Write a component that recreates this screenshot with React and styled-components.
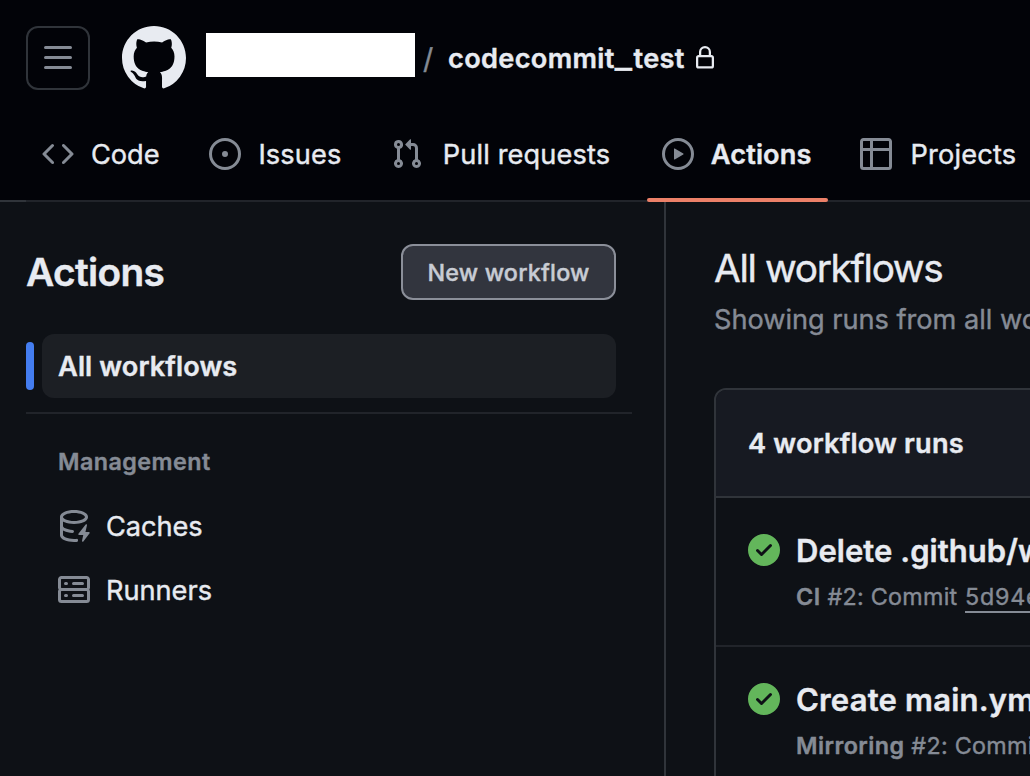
import React from 'react';
import styled, { createGlobalStyle } from 'styled-components';

const c = {
  bg: '#0e1116',
  inset: '#020308',
  text: '#e8ebf1',
  muted: '#858b95',
  border: '#30343a',
  borderMuted: '#21242a',
  accent: '#447df0',
  coral: '#ec8068',
  green: '#63b65b',
};

const GlobalStyle = createGlobalStyle`
  * { box-sizing: border-box; }
  html, body { margin: 0; height: 100%; overflow: hidden; background: ${c.bg}; }
  body {
    font-family: Inter, "Liberation Sans", sans-serif;
    font-size: 27.2px;
    color: ${c.text};
    white-space: nowrap;
    -webkit-text-stroke: 0.4px currentColor;
  }
  #root { height: 100%; }
  h1, h2, h3, p { margin: 0; }
`;

const Page = styled.div`
  display: flex;
  flex-direction: column;
  width: 1030px;
  height: 776px;
  overflow: hidden;
`;

const Icon = styled.svg.attrs({ viewBox: '0 0 16 16', 'aria-hidden': true })`
  display: block;
  flex: none;
  width: ${(p) => p.$size || 32}px;
  height: ${(p) => p.$size || 32}px;
  fill: ${(p) => p.$color || c.muted};
`;

const Header = styled.header`
  flex: none;
  height: 202px;
  background: ${c.inset};
  display: flex;
  flex-direction: column;
`;

const TopBar = styled.div`
  display: flex;
  align-items: center;
  height: 108px;
  padding: 8px 26px 0;
`;

const MenuButton = styled.button`
  display: grid;
  place-items: center;
  width: 64px;
  height: 64px;
  padding: 0;
  margin-right: 32px;
  background: transparent;
  border: 2px solid ${c.border};
  border-radius: 12px;
`;

const Owner = styled.div`
  width: 209px;
  height: 44px;
  margin: -6px 0 0 20px;
  background: #fff;
`;

const Slash = styled.span`
  width: 33px;
  padding: 2px 0 0 8px;
  font-size: 28.5px;
  line-height: 40px;
  color: ${c.muted};
`;

const RepoName = styled.span`
  width: 245px;
  padding-top: 2px;
  font-weight: 600;
  line-height: 40px;
  letter-spacing: 0.32px;
`;

const Underscore = styled.span`
  display: inline-block;
  transform: scaleX(1.35);
  margin: 0 3.4px 0 2.4px;
`;

const TabBar = styled.nav`
  display: flex;
  gap: 16px;
  height: 92px;
  padding-left: 26px;
`;

const Tab = styled.a`
  position: relative;
  display: flex;
  align-items: center;
  flex: none;
  width: ${(p) => p.$width}px;
  padding: 0 15px 0 ${(p) => (p.$active ? 15 : 16)}px;
  font-weight: ${(p) => (p.$active ? 600 : 400)};
  letter-spacing: ${(p) => p.$tracking}px;

  &::after {
    content: '';
    display: ${(p) => (p.$active ? 'block' : 'none')};
    position: absolute;
    left: 0;
    right: 0;
    bottom: -2px;
    height: 4px;
    border-radius: 2px;
    background: ${c.coral};
  }
`;

const TabLabel = styled.span`
  margin-left: ${(p) => p.$inset}px;
  padding-top: 2px;
  line-height: 40px;
`;

const HeaderRule = styled.div`
  height: 2px;
  background: ${c.borderMuted};
  border-left: 26px solid ${c.border};
`;

const Body = styled.div`
  display: flex;
  flex: 1;
  min-height: 0;
`;

const Sidebar = styled.aside`
  flex: none;
  width: 666px;
  padding: 42px 32px 0 26px;
  border-right: 2px solid ${c.border};
`;

const SidebarHead = styled.div`
  display: flex;
  align-items: center;
  justify-content: space-between;
  height: 56px;
  padding-right: 16px;
`;

const SidebarTitle = styled.h2`
  font-size: 38.8px;
  font-weight: 600;
  line-height: 56px;
  letter-spacing: -0.66px;
`;

const NewButton = styled.button`
  width: 215px;
  height: 56px;
  padding: 1px 0 0;
  font: 500 23.3px/51px Inter, "Liberation Sans", sans-serif;
  letter-spacing: 0.22px;
  color: #c8ccd4;
  -webkit-text-stroke: 0.4px currentColor;
  background: #32353e;
  border: 2px solid #8b8f99;
  border-radius: 12px;
`;

const SelectedRow = styled.div`
  display: flex;
  align-items: center;
  gap: 8px;
  margin-top: 34px;
  padding-right: 16px;
`;

const SelectedBar = styled.span`
  width: 8px;
  height: 48px;
  border-radius: 4px;
  background: ${c.accent};
`;

const SelectedItem = styled.a`
  flex: 1;
  height: 64px;
  padding: 1px 0 0 16px;
  border-radius: 12px;
  background: #1c1f24;
  font-weight: 600;
  line-height: 64px;
  letter-spacing: 0.1px;
`;

const Divider = styled.div`
  height: 2px;
  margin-top: 14px;
  background: ${c.borderMuted};
`;

const GroupTitle = styled.h3`
  margin: 28px 0 12px;
  padding-left: 32px;
  font-size: 23.3px;
  font-weight: 600;
  line-height: 40px;
  letter-spacing: 0.46px;
  color: ${c.muted};
`;

const NavItem = styled.a`
  display: flex;
  align-items: center;
  gap: 16px;
  height: 64px;
  padding-left: 32px;
  letter-spacing: ${(p) => p.$tracking}px;
`;

const Main = styled.main`
  flex: 1;
  min-width: 0;
  overflow: hidden;
  padding: 42px 0 0 48px;
`;

const Title = styled.h1`
  font-size: 38.8px;
  font-weight: 400;
  line-height: 48px;
  letter-spacing: -1.34px;
`;

const Subtitle = styled.p`
  margin-top: 8px;
  line-height: 40px;
  letter-spacing: -0.03px;
  color: ${c.muted};
`;

const RunsBox = styled.section`
  width: 900px;
  height: 600px;
  margin-top: 48px;
  border: 2px solid ${c.border};
  border-radius: 12px;
  overflow: hidden;
`;

const RunsHead = styled.div`
  height: 108px;
  padding: 1px 0 0 32px;
  border-bottom: 2px solid ${c.border};
  background: #171a22;
  font-weight: 600;
  line-height: 106px;
  letter-spacing: 0.18px;
`;

const RunRow = styled.article`
  display: flex;
  gap: 16px;
  height: 149px;
  padding: 32px 0 0 32px;
  border-bottom: 2px solid ${c.borderMuted};
`;

const RunStatus = styled.div`
  padding-top: 4px;
`;

const RunTitle = styled.h3`
  font-size: 31px;
  font-weight: 600;
  line-height: 42px;
  letter-spacing: ${(p) => p.$tracking}px;
`;

const RunMeta = styled.p`
  margin-top: 7px;
  font-size: 23.3px;
  line-height: 36px;
  letter-spacing: 0.28px;
  color: ${c.muted};

  b {
    font-weight: 600;
    letter-spacing: 0.46px;
  }
`;

const Hash = styled.a`
  margin-left: 0.7px;
  text-decoration: underline;
  text-decoration-thickness: 2px;
  text-underline-offset: 6px;
  text-decoration-skip-ink: none;
  letter-spacing: 0.8px;
`;

const paths = {
  bars: 'M1 2.75A.75.75 0 0 1 1.75 2h12.5a.75.75 0 0 1 0 1.5H1.75A.75.75 0 0 1 1 2.75Zm0 5A.75.75 0 0 1 1.75 7h12.5a.75.75 0 0 1 0 1.5H1.75A.75.75 0 0 1 1 7.75ZM1.75 12h12.5a.75.75 0 0 1 0 1.5H1.75a.75.75 0 0 1 0-1.5Z',
  mark: 'M8 0c4.42 0 8 3.58 8 8a8.013 8.013 0 0 1-5.45 7.59c-.4.08-.55-.17-.55-.38 0-.27.01-1.13.01-2.2 0-.75-.25-1.23-.54-1.48 1.78-.2 3.65-.88 3.65-3.95 0-.88-.31-1.59-.82-2.15.08-.2.36-1.02-.08-2.12 0 0-.67-.22-2.2.82-.64-.18-1.32-.27-2-.27-.68 0-1.36.09-2 .27-1.53-1.03-2.2-.82-2.2-.82-.44 1.1-.16 1.92-.08 2.12-.51.56-.82 1.28-.82 2.15 0 3.06 1.86 3.75 3.64 3.95-.23.2-.44.55-.51 1.07-.46.21-1.61.55-2.33-.66-.15-.24-.6-.83-1.23-.82-.67.01-.27.38.01.53.34.19.73.9.82 1.13.16.45.68 1.31 2.69.94 0 .67.01 1.3.01 1.49 0 .21-.15.45-.55.38A7.995 7.995 0 0 1 0 8c0-4.42 3.58-8 8-8Z',
  lock: 'M4 4a4 4 0 0 1 8 0v2h.25c.966 0 1.75.784 1.75 1.75v5.5A1.75 1.75 0 0 1 12.25 15h-8.5A1.75 1.75 0 0 1 2 13.25v-5.5C2 6.784 2.784 6 3.75 6H4Zm8.25 3.5h-8.5a.25.25 0 0 0-.25.25v5.5c0 .138.112.25.25.25h8.5a.25.25 0 0 0 .25-.25v-5.5a.25.25 0 0 0-.25-.25ZM10.5 6V4a2.5 2.5 0 1 0-5 0v2Z',
  code: 'm11.28 3.22 4.25 4.25a.75.75 0 0 1 0 1.06l-4.25 4.25a.749.749 0 0 1-1.275-.326.749.749 0 0 1 .215-.734L13.94 8l-3.72-3.72a.749.749 0 0 1 .326-1.275.749.749 0 0 1 .734.215Zm-6.56 0a.751.751 0 0 1 1.042.018.751.751 0 0 1 .018 1.042L2.06 8l3.72 3.72a.749.749 0 0 1-.326 1.275.749.749 0 0 1-.734-.215L.47 8.53a.75.75 0 0 1 0-1.06Z',
  issue: 'M8 9.5a1.5 1.5 0 1 0 0-3 1.5 1.5 0 0 0 0 3ZM8 0a8 8 0 1 1 0 16A8 8 0 0 1 8 0ZM1.5 8a6.5 6.5 0 1 0 13 0 6.5 6.5 0 0 0-13 0Z',
  pull: 'M1.5 3.25a2.25 2.25 0 1 1 3 2.122v5.256a2.251 2.251 0 1 1-1.5 0V5.372A2.25 2.25 0 0 1 1.5 3.25Zm5.677-.177L9.573.677A.25.25 0 0 1 10 .854V2.5h1A2.5 2.5 0 0 1 13.5 5v5.628a2.251 2.251 0 1 1-1.5 0V5a1 1 0 0 0-1-1h-1v1.646a.25.25 0 0 1-.427.177L7.177 3.427a.25.25 0 0 1 0-.354ZM3.75 2.5a.75.75 0 1 0 0 1.5.75.75 0 0 0 0-1.5Zm0 9.5a.75.75 0 1 0 0 1.5.75.75 0 0 0 0-1.5Zm8.25.75a.75.75 0 1 0 1.5 0 .75.75 0 0 0-1.5 0Z',
  play: 'M8 0a8 8 0 1 1 0 16A8 8 0 0 1 8 0ZM1.5 8a6.5 6.5 0 1 0 13 0 6.5 6.5 0 0 0-13 0Zm4.879-2.773 4.264 2.559a.25.25 0 0 1 0 .428l-4.264 2.559A.25.25 0 0 1 6 10.559V5.442a.25.25 0 0 1 .379-.215Z',
  table: 'M0 1.75C0 .784.784 0 1.75 0h12.5C15.216 0 16 .784 16 1.75v12.5A1.75 1.75 0 0 1 14.25 16H1.75A1.75 1.75 0 0 1 0 14.25ZM6.5 6.5v8h7.75a.25.25 0 0 0 .25-.25V6.5Zm8-1.5V1.75a.25.25 0 0 0-.25-.25H6.5V5Zm-13 1.5v7.75c0 .138.112.25.25.25H5v-8ZM5 5V1.5H1.75a.25.25 0 0 0-.25.25V5Z',
  cache: 'M2.5 5.724V8c0 .248.238.7 1.169 1.159.874.43 2.144.745 3.62.822a.75.75 0 1 1-.078 1.498c-1.622-.085-3.102-.432-4.204-.975a5.565 5.565 0 0 1-.507-.28V12.5c0 .133.058.318.282.551.227.237.591.483 1.101.707 1.015.447 2.47.742 4.117.742.406 0 .802-.018 1.183-.052a.751.751 0 1 1 .134 1.494C8.89 15.98 8.45 16 8 16c-1.805 0-3.475-.32-4.721-.869-.623-.274-1.173-.619-1.579-1.041-.408-.425-.7-.964-.7-1.59v-9c0-.626.292-1.165.7-1.591.406-.42.956-.766 1.579-1.04C4.525.32 6.195 0 8 0c1.806 0 3.476.32 4.721.869.623.274 1.173.619 1.579 1.041.408.425.7.964.7 1.59 0 .626-.292 1.165-.7 1.591-.406.42-.956.766-1.578 1.04C11.475 6.68 9.805 7 8 7c-1.805 0-3.475-.32-4.721-.869a6.15 6.15 0 0 1-.779-.407Zm0-2.224c0 .133.058.318.282.551.227.237.591.483 1.101.707C4.898 5.205 6.353 5.5 8 5.5c1.646 0 3.101-.295 4.118-.742.508-.224.873-.471 1.1-.708.224-.232.282-.417.282-.55 0-.133-.058-.318-.282-.551-.227-.237-.591-.483-1.101-.707C11.102 1.795 9.647 1.5 8 1.5c-1.646 0-3.101.295-4.118.742-.508.224-.873.471-1.1.708-.224.232-.282.417-.282.55ZM14.49 7.582a.375.375 0 0 0-.66-.313l-3.625 4.625a.375.375 0 0 0 .295.606h2.127l-.619 2.922a.375.375 0 0 0 .666.304l3.125-4.125A.375.375 0 0 0 15.5 11h-1.778l.769-3.418Z',
  server: 'M1.75 1h12.5c.966 0 1.75.784 1.75 1.75v4c0 .372-.116.717-.314 1 .198.283.314.628.314 1v4a1.75 1.75 0 0 1-1.75 1.75H1.75A1.75 1.75 0 0 1 0 12.75v-4c0-.358.109-.707.314-1a1.739 1.739 0 0 1-.314-1v-4C0 1.784.784 1 1.75 1ZM1.5 2.75v4c0 .138.112.25.25.25h12.5a.25.25 0 0 0 .25-.25v-4a.25.25 0 0 0-.25-.25H1.75a.25.25 0 0 0-.25.25Zm.25 5.75a.25.25 0 0 0-.25.25v4c0 .138.112.25.25.25h12.5a.25.25 0 0 0 .25-.25v-4a.25.25 0 0 0-.25-.25ZM7 4.75A.75.75 0 0 1 7.75 4h4.5a.75.75 0 0 1 0 1.5h-4.5A.75.75 0 0 1 7 4.75ZM7.75 10h4.5a.75.75 0 0 1 0 1.5h-4.5a.75.75 0 0 1 0-1.5ZM3 4.75A.75.75 0 0 1 3.75 4h.5a.75.75 0 0 1 0 1.5h-.5A.75.75 0 0 1 3 4.75ZM3.75 10h.5a.75.75 0 0 1 0 1.5h-.5a.75.75 0 0 1 0-1.5Z',
  check: 'M8 16A8 8 0 1 1 8 0a8 8 0 0 1 0 16Zm3.78-9.72a.751.751 0 0 0-.018-1.042.751.751 0 0 0-1.042-.018L6.75 9.19 5.28 7.72a.751.751 0 0 0-1.042.018.751.751 0 0 0-.018 1.042l2 2a.75.75 0 0 0 1.06 0Z',
};

const Octicon = ({ name, size, color }) => (
  <Icon $size={size} $color={color}>
    <path fillRule="evenodd" d={paths[name]} />
  </Icon>
);

const tabs = [
  { icon: 'code', label: 'Code', width: 151, inset: 17, tracking: -0.02 },
  { icon: 'issue', label: 'Issues', width: 166, inset: 17.4, tracking: 0.12 },
  { icon: 'pull', label: 'Pull requests', width: 256, inset: 19.8, tracking: 0.12 },
  { icon: 'play', label: 'Actions', width: 181, inset: 16.8, tracking: 0.1, active: true },
  { icon: 'table', label: 'Projects', width: 190, inset: 18.5, tracking: 0.18 },
];

const runs = [
  { title: 'Delete .github/workflows', tracking: 0.04, workflow: 'CI', hash: '5d94e' },
  { title: 'Create main.yml', tracking: 0.2, workflow: 'Mirroring', hash: '' },
];

export default function App() {
  return (
    <Page>
      <GlobalStyle />
      <Header>
        <TopBar>
          <MenuButton aria-label="Open menu">
            <Octicon name="bars" />
          </MenuButton>
          <Octicon name="mark" size={64} color={c.text} />
          <Owner />
          <Slash>/</Slash>
          <RepoName>
            codecommit<Underscore>_</Underscore>test
          </RepoName>
          <Octicon name="lock" size={24} color={c.text} />
        </TopBar>
        <TabBar>
          {tabs.map((t) => (
            <Tab key={t.label} $width={t.width} $active={t.active} $tracking={t.tracking}>
              <Octicon name={t.icon} />
              <TabLabel $inset={t.inset}>{t.label}</TabLabel>
            </Tab>
          ))}
        </TabBar>
        <HeaderRule />
      </Header>
      <Body>
        <Sidebar>
          <SidebarHead>
            <SidebarTitle>Actions</SidebarTitle>
            <NewButton>New workflow</NewButton>
          </SidebarHead>
          <SelectedRow>
            <SelectedBar />
            <SelectedItem>All workflows</SelectedItem>
          </SelectedRow>
          <Divider />
          <GroupTitle>Management</GroupTitle>
          <NavItem $tracking={-0.08}>
            <Octicon name="cache" />
            Caches
          </NavItem>
          <NavItem $tracking={-0.02}>
            <Octicon name="server" />
            Runners
          </NavItem>
        </Sidebar>
        <Main>
          <Title>All workflows</Title>
          <Subtitle>Showing runs from all workflows</Subtitle>
          <RunsBox>
            <RunsHead>4 workflow runs</RunsHead>
            {runs.map((r) => (
              <RunRow key={r.title}>
                <RunStatus>
                  <Octicon name="check" color={c.green} />
                </RunStatus>
                <div>
                  <RunTitle $tracking={r.tracking}>{r.title}</RunTitle>
                  <RunMeta>
                    <b>{r.workflow}</b> #2: Commit {r.hash && <Hash>{r.hash}</Hash>}
                  </RunMeta>
                </div>
              </RunRow>
            ))}
          </RunsBox>
        </Main>
      </Body>
    </Page>
  );
}
